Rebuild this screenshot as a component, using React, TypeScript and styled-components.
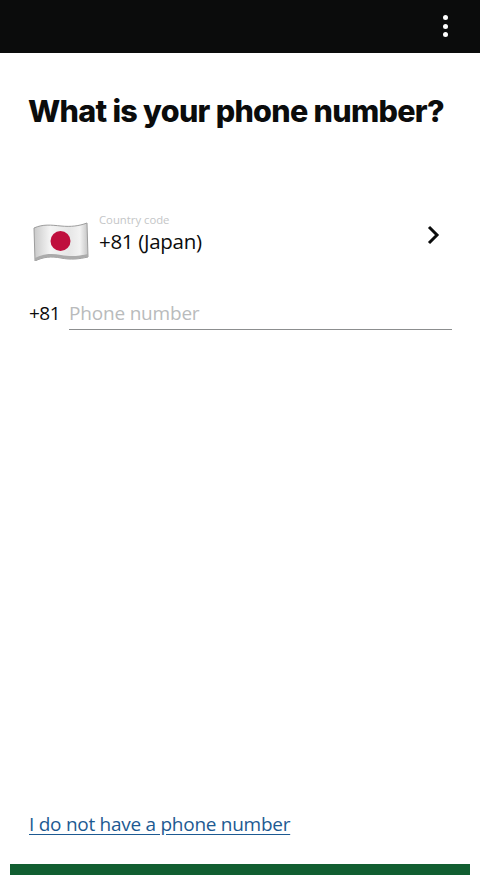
import React from 'react';
import styled, { createGlobalStyle } from 'styled-components';

const GlobalStyle = createGlobalStyle`
  html, body {
    margin: 0;
    padding: 0;
    background: #ffffff;
  }
  * {
    box-sizing: border-box;
  }
`;

const Page = styled.div`
  width: 480px;
  height: 875px;
  display: flex;
  flex-direction: column;
  overflow: hidden;
  font-family: "Open Sans", "Liberation Sans", sans-serif;
  color: #0b0c0c;
  background: #ffffff;
`;

const TopBar = styled.div`
  height: 53px;
  flex-shrink: 0;
  display: flex;
  align-items: center;
  justify-content: flex-end;
  padding: 0 32px 0 0;
  background: #0b0c0c;
`;

const MenuDots = styled.div`
  display: flex;
  flex-direction: column;
  gap: 3.5px;
  margin-top: -1px;
`;

const MenuDot = styled.span`
  width: 5px;
  height: 5px;
  border-radius: 50%;
  background: #ffffff;
`;

const Content = styled.main`
  flex: 1;
  display: flex;
  flex-direction: column;
  padding: 37px 28px 0 29px;
`;

const Title = styled.h1`
  margin: 0 0 0 -1px;
  font-family: "Inter", "Liberation Sans", sans-serif;
  font-size: 30.5px;
  line-height: 42px;
  font-weight: 800;
  letter-spacing: -0.7px;
  white-space: nowrap;
`;

const CountryRow = styled.div`
  display: flex;
  align-items: center;
  margin-top: 84px;
  padding-left: 4px;
  height: 50px;
`;

const FlagIcon = styled.svg`
  width: 56px;
  height: 40px;
  flex-shrink: 0;
  margin-right: 10px;
`;

const CountryText = styled.div`
  flex: 1;
  display: flex;
  flex-direction: column;
  margin-top: -16px;
`;

const CountryLabel = styled.span`
  font-size: 11.3px;
  line-height: 13px;
  color: #c4c6c7;
`;

const CountryValue = styled.span`
  margin-top: 2px;
  font-size: 20.5px;
  line-height: 26px;
  letter-spacing: -0.3px;
`;

const Chevron = styled.svg`
  width: 14px;
  height: 22px;
  margin-right: 12px;
  margin-top: -13px;
`;

const PhoneRow = styled.div`
  display: flex;
  align-items: flex-end;
  margin-top: 29px;
  gap: 9px;
`;

const Prefix = styled.span`
  margin-bottom: 1px;
  font-size: 19px;
  line-height: 32px;
  letter-spacing: -0.5px;
`;

const PhoneInput = styled.input`
  flex: 1;
  min-width: 0;
  height: 35px;
  padding: 1px 0 0;
  border: 0;
  border-bottom: 1px solid #8c8e8f;
  outline: none;
  background: transparent;
  font-family: inherit;
  font-size: 19px;
  letter-spacing: -0.2px;

  &::placeholder {
    color: #b9bbbc;
    opacity: 1;
  }
`;

const Spacer = styled.div`
  flex: 1;
`;

const NoPhoneLink = styled.a`
  font-size: 19px;
  line-height: 26px;
  letter-spacing: -0.27px;
  color: #1d5a92;
  text-decoration: underline;
  text-underline-offset: 3px;
  margin-bottom: 27px;
`;

const ContinueButton = styled.button`
  flex-shrink: 0;
  display: block;
  width: 460px;
  height: 11px;
  margin: 0 10px;
  padding: 0;
  border: 0;
  background: #115e31;
`;

const JapanFlag = () => (
  <FlagIcon viewBox="0 0 56 40">
    <defs>
      <linearGradient id="flagCloth" x1="0" y1="0" x2="1" y2="0">
        <stop offset="0" stopColor="#c9c9c9" />
        <stop offset="0.3" stopColor="#f4f4f4" />
        <stop offset="0.65" stopColor="#e6e6e6" />
        <stop offset="0.85" stopColor="#f2f2f2" />
        <stop offset="1" stopColor="#c4c4c4" />
      </linearGradient>
    </defs>
    <path
      d="M1 7 C10 3 18 4 28 5 C38 6 46 5 54 2 L55 36 C46 38 38 39 28 37 C18 35 10 36 2 40 Z"
      fill="url(#flagCloth)"
      stroke="#9d9d9d"
      strokeWidth="1"
    />
    <path d="M2 37 C10 33 18 32 28 34 C38 36 46 35 55 33 L55 36 C46 38 38 39 28 37 C18 35 10 36 2 40 Z" fill="#ababab" />
    <circle cx="27.5" cy="20" r="10" fill="#bf0f3d" />
  </FlagIcon>
);

export default function App() {
  return (
    <Page>
      <GlobalStyle />
      <TopBar>
        <MenuDots>
          <MenuDot />
          <MenuDot />
          <MenuDot />
        </MenuDots>
      </TopBar>
      <Content>
        <Title>What is your phone number?</Title>
        <CountryRow>
          <JapanFlag />
          <CountryText>
            <CountryLabel>Country code</CountryLabel>
            <CountryValue>+81 (Japan)</CountryValue>
          </CountryText>
          <Chevron viewBox="0 0 14 22">
            <path d="M3 3 L11 11 L3 19" fill="none" stroke="#0b0c0c" strokeWidth="3" />
          </Chevron>
        </CountryRow>
        <PhoneRow>
          <Prefix>+81</Prefix>
          <PhoneInput placeholder="Phone number" />
        </PhoneRow>
        <Spacer />
        <NoPhoneLink href="#">I do not have a phone number</NoPhoneLink>
      </Content>
      <ContinueButton aria-label="Continue" />
    </Page>
  );
}
